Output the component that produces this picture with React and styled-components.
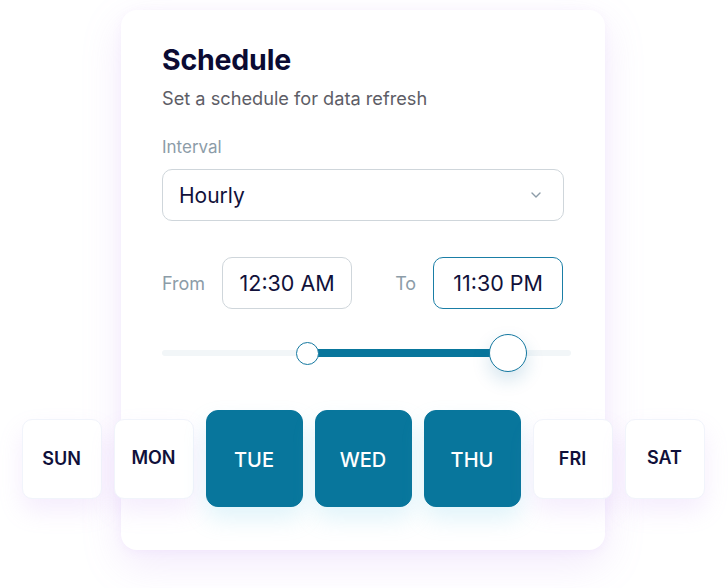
import React from "react";
import styled, { createGlobalStyle } from "styled-components";

const Global = createGlobalStyle`
  html, body { margin: 0; padding: 0; background: #ffffff; }
  body { font-family: Inter, "Noto Sans", sans-serif; -webkit-font-smoothing: antialiased; }
`;

const Page = styled.div`
  width: 728px;
  height: 588px;
  padding: 10px 0 0 121px;
  box-sizing: border-box;
  overflow: hidden;
`;

const Card = styled.div`
  width: 484px;
  height: 540px;
  box-sizing: border-box;
  padding: 33px 41px 0;
  background: #ffffff;
  border-radius: 16px;
  box-shadow: 0 14px 40px rgba(190, 140, 240, 0.18), 0 2px 10px rgba(190, 140, 240, 0.08);
  display: flex;
  flex-direction: column;
`;

const Title = styled.h1`
  margin: 0;
  font-size: 28.5px;
  line-height: 34px;
  font-weight: 700;
  color: #0b0b33;
  letter-spacing: -0.2px;
`;

const Subtitle = styled.p`
  margin: 10px 0 0;
  font-size: 18.2px;
  line-height: 22px;
  color: #5d5d66;
`;

const Label = styled.div`
  margin-top: 27px;
  font-size: 17px;
  line-height: 22px;
  color: #8c9ca8;
`;

const Select = styled.div`
  margin-top: 11px;
  height: 52px;
  box-sizing: border-box;
  border: 1.5px solid #cfd6db;
  border-radius: 10px;
  display: flex;
  align-items: center;
  justify-content: space-between;
  padding: 0 22px 0 16px;
  font-size: 21px;
  color: #11113a;
  flex-shrink: 0;
`;

const TimeRow = styled.div`
  margin-top: 36px;
  display: flex;
  align-items: center;
`;

const TimeGroup = styled.div`
  display: flex;
  align-items: center;
  gap: 17px;
  margin-left: ${(p) => p.$offset || 0}px;
`;

const TimeLabel = styled.span`
  font-size: 18px;
  color: #8c9ca8;
`;

const TimeBox = styled.div`
  width: 130px;
  height: 52px;
  box-sizing: border-box;
  border: 1.5px solid ${(p) => (p.$active ? "#1a7ea6" : "#cfd6db")};
  border-radius: 10px;
  display: flex;
  align-items: center;
  justify-content: center;
  font-size: 21.5px;
  color: #11113a;
`;

const Slider = styled.div`
  position: relative;
  margin-top: 24px;
  width: 409px;
  height: 40px;
  flex-shrink: 0;
`;

const Track = styled.div`
  position: absolute;
  left: 0;
  right: 0;
  top: 17px;
  height: 6px;
  border-radius: 3px;
  background: #f2f6f8;
`;

const Fill = styled.div`
  position: absolute;
  top: 16px;
  height: 8px;
  background: #08769c;
`;

const Thumb = styled.div`
  position: absolute;
  top: 50%;
  width: ${(p) => p.$size}px;
  height: ${(p) => p.$size}px;
  margin-left: ${(p) => -p.$size / 2}px;
  margin-top: ${(p) => -p.$size / 2}px;
  box-sizing: border-box;
  border-radius: 50%;
  background: #ffffff;
  border: 1.5px solid #1478a0;
  box-shadow: ${(p) => (p.$big ? "0 8px 18px rgba(20, 110, 160, 0.18)" : "none")};
`;

const Days = styled.div`
  margin: 37px -141px 0 -141px;
  height: 97px;
  display: flex;
  align-items: center;
  justify-content: center;
  gap: 12px;
  flex-shrink: 0;
`;

const Day = styled.div`
  width: ${(p) => (p.$on ? 97 : 80)}px;
  height: ${(p) => (p.$on ? 97 : 80)}px;
  box-sizing: border-box;
  border-radius: ${(p) => (p.$on ? 12 : 10)}px;
  background: ${(p) => (p.$on ? "#08769c" : "#ffffff")};
  border: 1px solid ${(p) => (p.$on ? "#08769c" : "#f1f4fb")};
  box-shadow: ${(p) =>
    p.$on
      ? "0 12px 22px rgba(120, 205, 230, 0.22)"
      : "0 12px 24px rgba(190, 140, 240, 0.16)"};
  display: flex;
  align-items: center;
  justify-content: center;
  padding-bottom: ${(p) => (p.$raise ? 3 : 0)}px;
  padding-top: ${(p) => (p.$on ? 2 : 0)}px;
  font-size: ${(p) => (p.$on ? 20 : 18)}px;
  font-weight: ${(p) => (p.$on ? 500 : 600)};
  color: ${(p) => (p.$on ? "#ffffff" : "#10103a")};
`;

const Chevron = () => (
  <svg width="10" height="6" viewBox="0 0 10 6" fill="none">
    <path d="M1 1l4 4 4-4" stroke="#8c9ca8" strokeWidth="1.4" strokeLinecap="round" strokeLinejoin="round" />
  </svg>
);

const days = [
  { n: "SUN" },
  { n: "MON", raise: true },
  { n: "TUE", on: true },
  { n: "WED", on: true },
  { n: "THU", on: true },
  { n: "FRI" },
  { n: "SAT", raise: true },
];

export default function App() {
  const lo = 145;
  const hi = 346;
  return (
    <Page>
      <Global />
      <Card>
        <Title>Schedule</Title>
        <Subtitle>Set a schedule for data refresh</Subtitle>
        <Label>Interval</Label>
        <Select>
          <span>Hourly</span>
          <Chevron />
        </Select>
        <TimeRow>
          <TimeGroup>
            <TimeLabel>From</TimeLabel>
            <TimeBox>12:30 AM</TimeBox>
          </TimeGroup>
          <TimeGroup $offset={43}>
            <TimeLabel>To</TimeLabel>
            <TimeBox $active>11:30 PM</TimeBox>
          </TimeGroup>
        </TimeRow>
        <Slider>
          <Track />
          <Fill style={{ left: lo, width: hi - lo }} />
          <Thumb $size={23} style={{ left: lo }} />
          <Thumb $size={38} $big style={{ left: hi }} />
        </Slider>
        <Days>
          {days.map((d) => (
            <Day key={d.n} $on={d.on} $raise={d.raise}>
              {d.n}
            </Day>
          ))}
        </Days>
      </Card>
    </Page>
  );
}
